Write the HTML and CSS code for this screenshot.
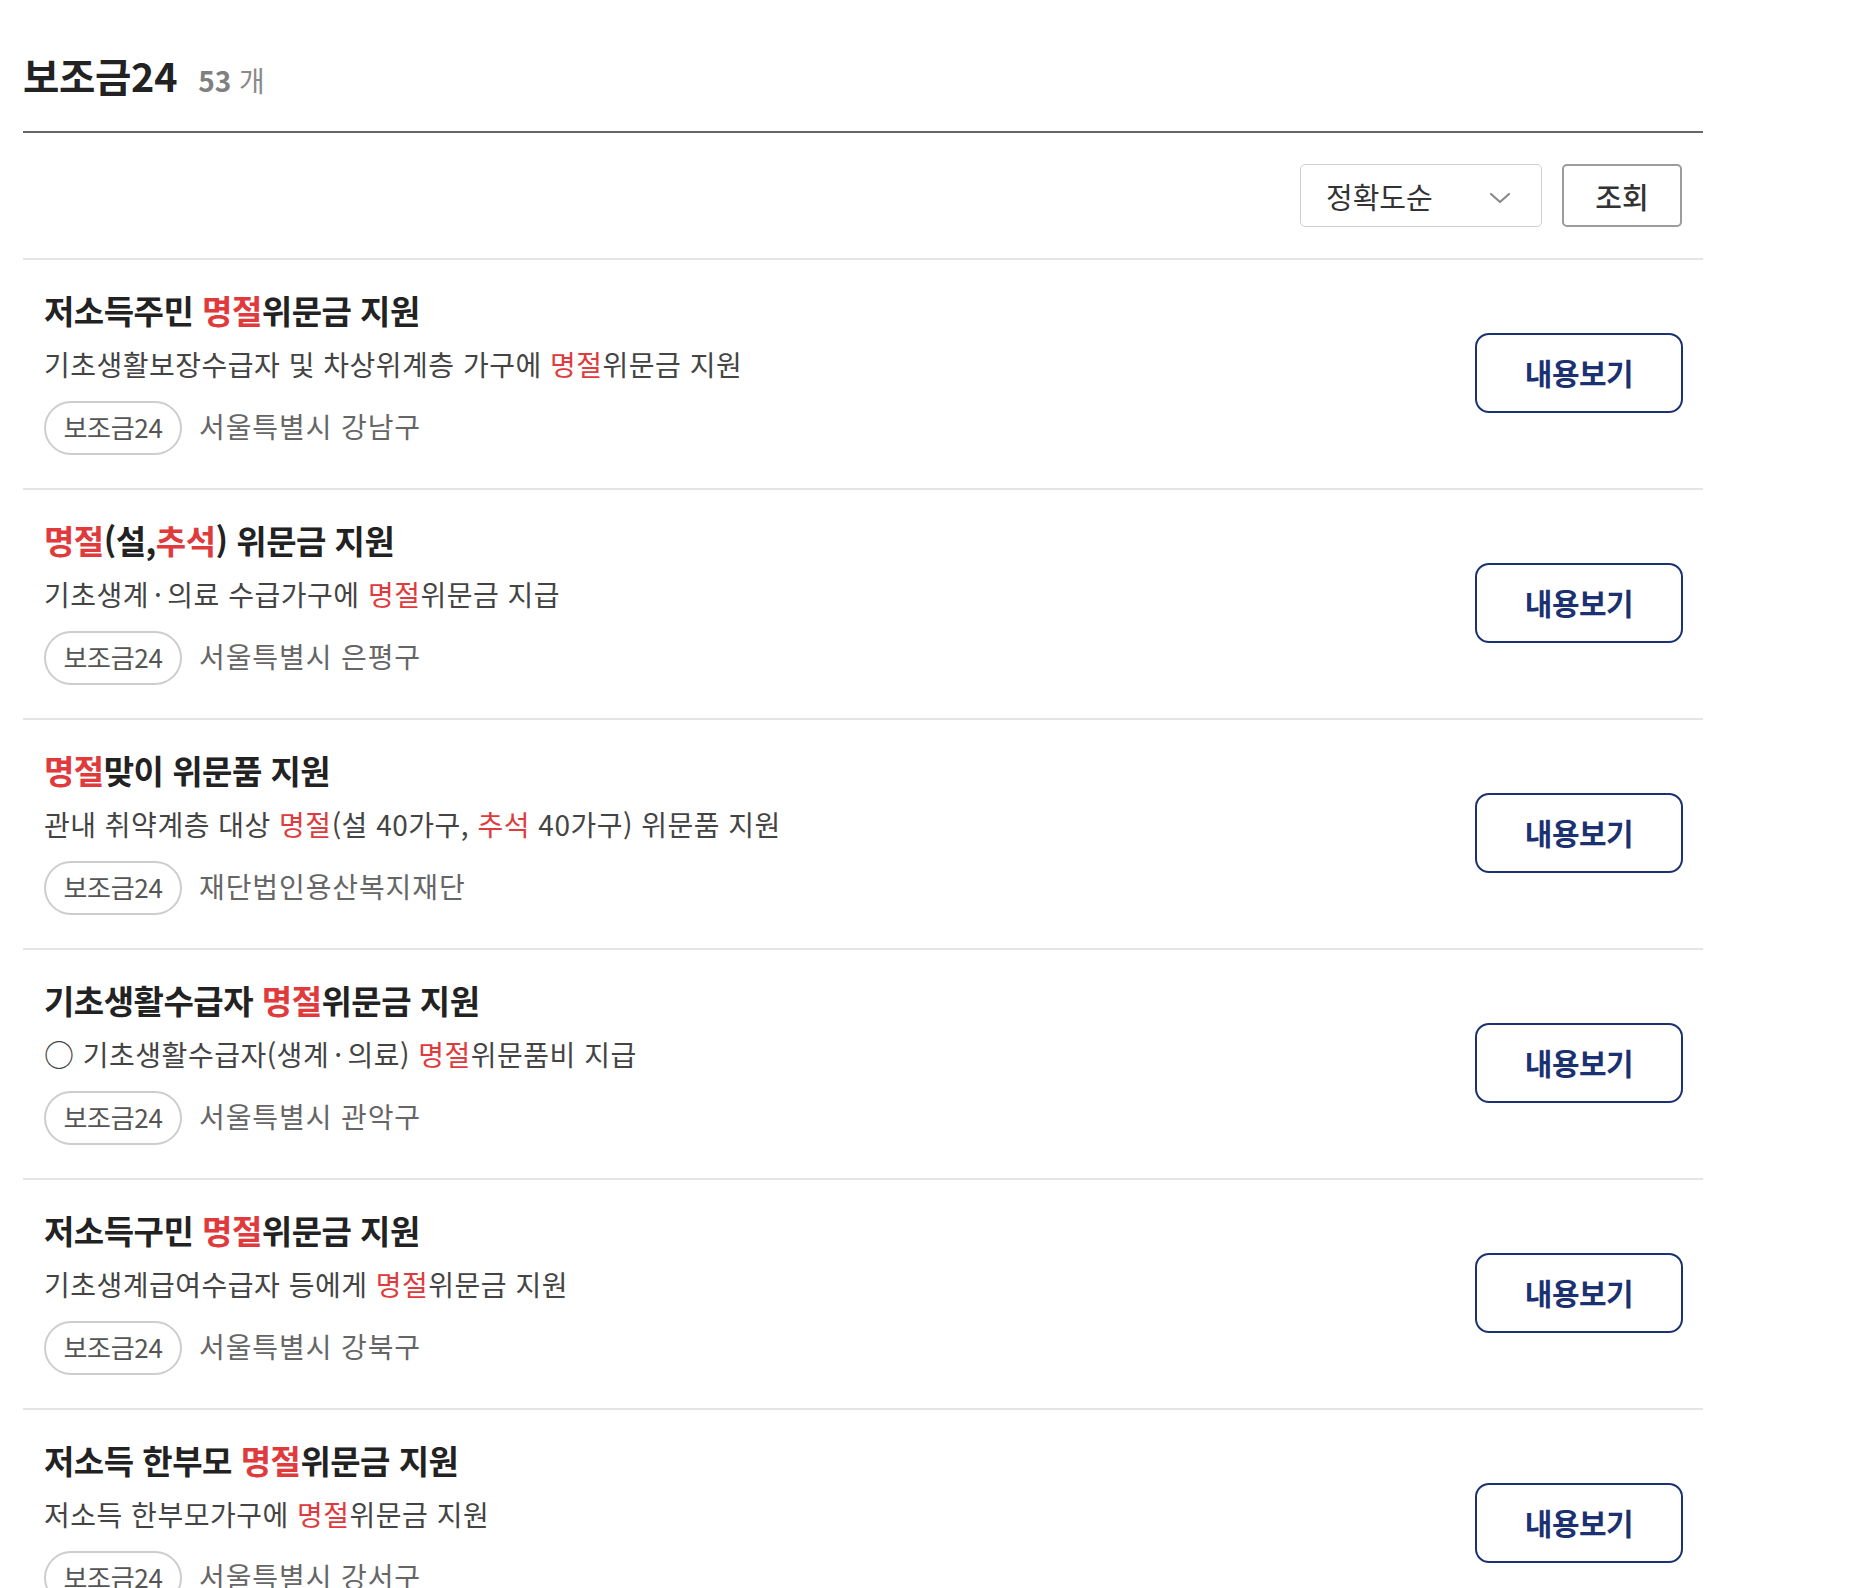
FILE: index.html
```html
<!DOCTYPE html>
<html lang="ko">
<head>
<meta charset="utf-8">
<title>보조금24</title>
<link rel="stylesheet" href="styles.css">
</head>
<body>
<div class="page">
  <div class="head">
    <h1 class="head-title">보조금24</h1>
    <span class="head-count"><b>53</b> 개</span>
  </div>
  <div class="toolbar">
    <div class="select">
      <span>정확도순</span>
      <svg class="chev" width="22" height="12" viewBox="0 0 22 12"><path d="M2 2 L11 10 L20 2" fill="none" stroke="#8a8a8a" stroke-width="2.2" stroke-linecap="round" stroke-linejoin="round"/></svg>
    </div>
    <button class="search-btn">조회</button>
  </div>
  <ul class="list">
    <li class="item">
      <div class="info">
        <h2 class="title">저소득주민 <em>명절</em>위문금 지원</h2>
        <p class="desc">기초생활보장수급자 및 차상위계층 가구에 <em>명절</em>위문금 지원</p>
        <div class="meta"><span class="tag">보조금24</span><span class="org">서울특별시 강남구</span></div>
      </div>
      <button class="view-btn">내용보기</button>
    </li>
    <li class="item">
      <div class="info">
        <h2 class="title"><em>명절</em>(설,<em>추석</em>) 위문금 지원</h2>
        <p class="desc">기초생계<span class="dot">·</span>의료 수급가구에 <em>명절</em>위문금 지급</p>
        <div class="meta"><span class="tag">보조금24</span><span class="org">서울특별시 은평구</span></div>
      </div>
      <button class="view-btn">내용보기</button>
    </li>
    <li class="item">
      <div class="info">
        <h2 class="title"><em>명절</em>맞이 위문품 지원</h2>
        <p class="desc">관내 취약계층 대상 <em>명절</em>(설 40가구, <em>추석</em> 40가구) 위문품 지원</p>
        <div class="meta"><span class="tag">보조금24</span><span class="org">재단법인용산복지재단</span></div>
      </div>
      <button class="view-btn">내용보기</button>
    </li>
    <li class="item">
      <div class="info">
        <h2 class="title">기초생활수급자 <em>명절</em>위문금 지원</h2>
        <p class="desc"><span class="circle">○</span> 기초생활수급자(생계<span class="dot">·</span>의료) <em>명절</em>위문품비 지급</p>
        <div class="meta"><span class="tag">보조금24</span><span class="org">서울특별시 관악구</span></div>
      </div>
      <button class="view-btn">내용보기</button>
    </li>
    <li class="item">
      <div class="info">
        <h2 class="title">저소득구민 <em>명절</em>위문금 지원</h2>
        <p class="desc">기초생계급여수급자 등에게 <em>명절</em>위문금 지원</p>
        <div class="meta"><span class="tag">보조금24</span><span class="org">서울특별시 강북구</span></div>
      </div>
      <button class="view-btn">내용보기</button>
    </li>
    <li class="item">
      <div class="info">
        <h2 class="title">저소득 한부모 <em>명절</em>위문금 지원</h2>
        <p class="desc">저소득 한부모가구에 <em>명절</em>위문금 지원</p>
        <div class="meta"><span class="tag">보조금24</span><span class="org">서울특별시 강서구</span></div>
      </div>
      <button class="view-btn">내용보기</button>
    </li>
  </ul>
</div>
</body>
</html>
```

FILE: styles.css
```css
* { box-sizing: border-box; }
html, body { margin: 0; padding: 0; background: #fff; }
body {
  font-family: "Noto Sans CJK KR", "Noto Sans", sans-serif;
  color: #222;
}
.page {
  width: 1680px;
  margin-left: 23px;
  padding-top: 51px;
}
.head {
  display: flex;
  align-items: baseline;
  gap: 21px;
  height: 82px;
  border-bottom: 2px solid #666;
}
.head-title {
  margin: 0;
  font-size: 39.5px;
  line-height: 48px;
  font-weight: 700;
  color: #222;
  letter-spacing: -0.3px;
}
.head-count {
  font-size: 28px;
  color: #8a8a8a;
  font-weight: 400;
}
.head-count b { font-weight: 700; color: #808080; }
.toolbar {
  display: flex;
  justify-content: flex-end;
  gap: 20px;
  padding: 31px 21px 31px;
}
.select {
  width: 242px;
  height: 63px;
  border: 1px solid #cfcfcf;
  border-radius: 5px;
  display: flex;
  align-items: center;
  justify-content: space-between;
  padding: 0 30px 0 25px;
  font-size: 29px;
  color: #333;
}
.chev { margin-top: 5px; }
.search-btn {
  width: 120px;
  height: 63px;
  border: 2px solid #9c9c9c;
  border-radius: 5px;
  background: #fff;
  font-family: inherit;
  font-size: 29px;
  font-weight: 500;
  color: #333;
  padding: 0;
}
.list {
  list-style: none;
  margin: 0;
  padding: 0;
  border-top: 2px solid #e4e4e4;
}
.item {
  display: flex;
  align-items: center;
  justify-content: space-between;
  padding: 30px 20px 33px 21px;
  border-bottom: 2px solid #e4e4e4;
}
.title {
  margin: 0;
  font-size: 33px;
  line-height: 40px;
  font-weight: 700;
  letter-spacing: -0.5px;
  color: #222;
}
em {
  font-style: normal;
  color: #e03a3c;
}
.desc {
  margin: 16px 0 0;
  font-size: 28px;
  line-height: 36px;
  letter-spacing: 0.5px;
  color: #444;
}
.dot { margin: 0 5px; }
.circle { font-size: 30px; line-height: 1; }
.meta {
  display: flex;
  align-items: center;
  gap: 17px;
  margin-top: 19px;
}
.tag {
  height: 54px;
  width: 138px;
  border: 2px solid #cdcdcd;
  border-radius: 27px;
  display: flex;
  align-items: center;
  justify-content: center;
  padding-bottom: 3px;
  font-size: 26px;
  letter-spacing: -0.3px;
  color: #555;
}
.org {
  padding-bottom: 4px;
  font-size: 28px;
  letter-spacing: 0.9px;
  color: #666;
}
.view-btn {
  width: 208px;
  height: 80px;
  border: 2px solid #1b3172;
  border-radius: 14px;
  background: #fff;
  font-family: inherit;
  font-size: 30px;
  font-weight: 700;
  color: #1b3172;
  letter-spacing: -0.5px;
  padding: 0 0 2px;
}
```
